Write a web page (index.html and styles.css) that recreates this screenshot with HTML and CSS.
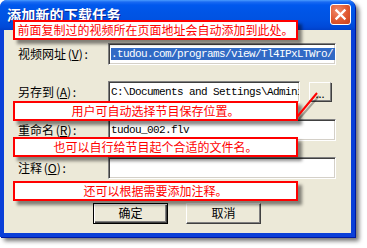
FILE: index.html
```html
<!DOCTYPE html>
<html>
<head>
<meta charset="utf-8">
<link rel="stylesheet" href="styles.css">
</head>
<body>
<div class="window">
  <div class="titlebar">
    <span class="title">添加新的下载任务</span>
    <span class="close"><svg width="19" height="19" viewBox="0 0 19 19"><path d="M5.5 5.5 L13.5 13.5 M13.5 5.5 L5.5 13.5" stroke="#fff" stroke-width="2.4" stroke-linecap="square"/></svg></span>
  </div>
  <div class="client">
    <div class="form">
      <span class="lbl">视频网址 (<u>V</u>) :</span>
      <div class="field"><div class="input"><span class="sel">.tudou.com/programs/view/Tl4IPxLTWro/</span></div></div>

      <span class="lbl">另存到 (<u>A</u>) :</span>
      <div class="field"><div class="input short">C:\Documents and Settings\Administrator\My Documents</div><span class="browse">...</span></div>

      <span class="lbl">重命名 (<u>R</u>) :</span>
      <div class="field"><div class="input">tudou_002.flv</div></div>

      <span class="lbl">注释 (<u>O</u>) :</span>
      <div class="field"><div class="input"></div></div>
    </div>
    <div class="buttons">
      <span class="btn default">确定</span>
      <span class="btn">取消</span>
    </div>
  </div>
  <div class="tip t1">前面复制过的视频所在页面地址会自动添加到此处。</div>
  <div class="tip t2">用户可自动选择节目保存位置。</div>
  <div class="tip t3">也可以自行给节目起个合适的文件名。</div>
  <div class="tip t4">还可以根据需要添加注释。</div>
  <svg class="arrow" width="355" height="237" viewBox="0 0 355 237">
    <line x1="299" y1="119" x2="319" y2="96" stroke="rgba(0,0,0,0.3)" stroke-width="2"/>
    <line x1="297" y1="117" x2="317" y2="93" stroke="#f00" stroke-width="2"/>
  </svg>
</div>
</body>
</html>
```

FILE: styles.css
```css
html, body {
  margin: 0;
  padding: 0;
}
body {
  width: 367px;
  height: 248px;
  overflow: hidden;
  background: #fff;
  font-family: "Noto Sans CJK SC", "Liberation Sans", sans-serif;
  font-size: 12px;
}
.window {
  position: relative;
  width: 355px;
  height: 237px;
  display: flex;
  flex-direction: column;
  background: #0a3fd8;
  border-radius: 7px 7px 0 0;
  box-shadow: 1px 1px 0 #0018a0, 4px 4px 4px rgba(0, 0, 0, 0.55);
}
.titlebar {
  flex: none;
  height: 30px;
  box-sizing: border-box;
  padding: 4px 4px 0 7px;
  display: flex;
  justify-content: space-between;
  align-items: flex-start;
  border-radius: 7px 7px 0 0;
  background: linear-gradient(#4a9cff 0, #1a6af2 2px, #0058ee 5px, #0055e6 12px, #0052e2 20px, #0049d8 27px, #0040c8 30px);
}
.title {
  color: #fff;
  font-weight: bold;
  font-size: 14px;
  line-height: 18px;
  margin-top: 1px;
  letter-spacing: 0.2px;
  text-shadow: 1px 1px 0 #0a1f8f;
}
.close {
  width: 21px;
  height: 21px;
  box-sizing: border-box;
  border: 1px solid #fff;
  border-radius: 3px;
  background: radial-gradient(circle at 35% 30%, #f08a6c 0, #e0582f 55%, #c8401c 100%);
  display: flex;
  align-items: center;
  justify-content: center;
}
.client {
  flex: 1;
  margin: 0 4px 4px 4px;
  background: #ece9d8;
  padding: 13px 18px 0 14px;
}
.form {
  display: grid;
  grid-template-columns: 90px 1fr;
  row-gap: 16px;
  align-items: center;
}
.lbl {
  color: #000;
  font-size: 12px;
  line-height: 14px;
  white-space: nowrap;
  word-spacing: -1px;
}
.field {
  display: flex;
  align-items: center;
  gap: 9px;
}
.input {
  flex: 1;
  height: 22px;
  box-sizing: border-box;
  border: 1px solid;
  border-color: #808080 #fff #fff #808080;
  box-shadow: inset 1px 1px 0 #404040, inset -1px -1px 0 #d4d0c8;
  background: #fff;
  padding: 0 0 0 2px;
  font-family: "Liberation Mono", monospace;
  font-size: 11px;
  letter-spacing: -0.6px;
  line-height: 20px;
  white-space: nowrap;
  overflow: hidden;
  color: #000;
}
.input.short {
  flex: none;
  width: 192px;
}
.sel {
  background: #316ac5;
  color: #fff;
  padding-right: 2px;
}
.browse {
  width: 22px;
  height: 19px;
  box-sizing: border-box;
  border: 1px solid;
  border-color: #fff #808080 #808080 #fff;
  box-shadow: 1px 1px 0 #404040;
  background: #ece9d8;
  text-align: center;
  font-size: 11px;
  line-height: 20px;
  color: #000;
  margin-bottom: 1px;
}
.buttons {
  display: flex;
  justify-content: center;
  gap: 18px;
  margin-top: 24px;
  padding-left: 3px;
}
.btn {
  width: 75px;
  height: 21px;
  box-sizing: border-box;
  border: 1px solid;
  border-color: #fff #404040 #404040 #fff;
  box-shadow: inset -1px -1px 0 #808080;
  background: #ece9d8;
  text-align: center;
  line-height: 18px;
  font-size: 12px;
  color: #000;
}
.btn.default {
  border: 1px solid #000;
  box-shadow: inset 1px 1px 0 #fff, inset -1px -1px 0 #404040, inset -2px -2px 0 #808080;
}
.tip {
  position: absolute;
  left: 13px;
  width: 285px;
  height: 20px;
  box-sizing: border-box;
  border: 2px solid #f00;
  background: #fff;
  color: #f00;
  font-size: 12px;
  line-height: 16px;
  text-align: center;
  white-space: nowrap;
  box-shadow: 4px 4px 3px rgba(0, 0, 0, 0.45);
}
.t1 { top: 20px; }
.t2 { top: 101px; }
.t3 { top: 137px; }
.t4 { top: 181px; }
.arrow {
  position: absolute;
  left: 0;
  top: 0;
  pointer-events: none;
}
```
